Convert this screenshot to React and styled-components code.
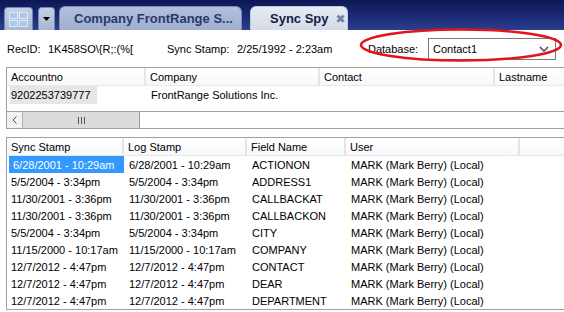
import React from 'react'
import styled, { createGlobalStyle } from 'styled-components'

const GlobalStyle = createGlobalStyle`
  html, body {
    margin: 0;
    padding: 0;
    background: #fff;
    overflow: hidden;
  }
  body {
    font-family: "Liberation Sans", Arial, sans-serif;
    font-size: 11px;
    color: #000;
  }
`

const topColumns = ['139px', '174px', '175px', '1fr']
const bottomColumns = ['117px', '123px', '99px', '174px', '1fr']

const logRows = [
  ['6/28/2001 - 10:29am', '6/28/2001 - 10:29am', 'ACTIONON'],
  ['5/5/2004 - 3:34pm', '5/5/2004 - 3:34pm', 'ADDRESS1'],
  ['11/30/2001 - 3:36pm', '11/30/2001 - 3:36pm', 'CALLBACKAT'],
  ['11/30/2001 - 3:36pm', '11/30/2001 - 3:36pm', 'CALLBACKON'],
  ['5/5/2004 - 3:34pm', '5/5/2004 - 3:34pm', 'CITY'],
  ['11/15/2000 - 10:17am', '11/15/2000 - 10:17am', 'COMPANY'],
  ['12/7/2012 - 4:47pm', '12/7/2012 - 4:47pm', 'CONTACT'],
  ['12/7/2012 - 4:47pm', '12/7/2012 - 4:47pm', 'DEAR'],
  ['12/7/2012 - 4:47pm', '12/7/2012 - 4:47pm', 'DEPARTMENT'],
]

const App = () => {
  return (
    <>
      <GlobalStyle />
      <Window>
        <TabBar>
          <ToolButton $width={29} $gap={0}>
            <svg width="19" height="15" viewBox="0 0 19 15">
              {[[0, 0], [10, 0], [0, 8], [10, 8]].map(([x, y]) => (
                <rect key={`${x}-${y}`} x={x + 0.5} y={y + 0.5} width="8" height="6" fill="#a9c8ee" stroke="#dfe9f7" />
              ))}
            </svg>
          </ToolButton>
          <ToolButton $width={17} $gap={5}>
            <svg width="7" height="4" viewBox="0 0 7 4">
              <polygon points="0,0 7,0 3.5,4" fill="#000" />
            </svg>
          </ToolButton>
          <Tab $gap={4} $width={183}>Company FrontRange S...</Tab>
          <Tab $gap={8} $width={98} $active>
            Sync Spy
            <CloseMark>✖</CloseMark>
          </Tab>
        </TabBar>

        {/* record info strip */}
        <InfoRow>
          <span>RecID:</span>
          <span>1K458SO\{'{'}R;:(%[</span>
          <span>Sync Stamp:</span>
          <span>2/25/1992 - 2:23am</span>
          <span>Database:</span>
          <Select>
            Contact1
            <svg width="10" height="7" viewBox="0 0 10 7">
              <polyline points="1,1 5,5 9,1" fill="none" stroke="#555" strokeWidth="1.6" />
            </svg>
          </Select>
          <Highlight width="204" height="34" viewBox="0 0 204 34">
            <ellipse cx="102" cy="17" rx="100" ry="15.5" fill="none" stroke="#e5141b" strokeWidth="2.6" />
          </Highlight>
        </InfoRow>

        <GridFrame>
          <HeaderRow $cols={topColumns}>
            <HeaderCell>Accountno</HeaderCell>
            <HeaderCell>Company</HeaderCell>
            <HeaderCell>Contact</HeaderCell>
            <HeaderCell>Lastname</HeaderCell>
          </HeaderRow>
          <DataRow $cols={topColumns} $height={18}>
            <Cell $pad={3}><Marked>9202253739777</Marked></Cell>
            <Cell>FrontRange Solutions Inc.</Cell>
            <Cell />
            <Cell />
          </DataRow>
          <Spacer />
          <HScroll>
            <ScrollArrow>
              <svg width="5" height="8" viewBox="0 0 5 8">
                <polyline points="4.5,0.5 1,4 4.5,7.5" fill="none" stroke="#444" strokeWidth="1" />
              </svg>
            </ScrollArrow>
            <Thumb>
              <Grip />
              <Grip />
              <Grip />
            </Thumb>
          </HScroll>
        </GridFrame>

        <GridFrame $gap={8}>
          <HeaderRow $cols={bottomColumns}>
            <HeaderCell>Sync Stamp</HeaderCell>
            <HeaderCell>Log Stamp</HeaderCell>
            <HeaderCell>Field Name</HeaderCell>
            <HeaderCell>User</HeaderCell>
            <HeaderCell />
          </HeaderRow>
          {logRows.map((row, i) => (
            <DataRow key={i} $cols={bottomColumns} $height={17}>
              <Cell $selected={i === 0} $pad={4}>{row[0]}</Cell>
              <Cell>{row[1]}</Cell>
              <Cell>{row[2]}</Cell>
              <Cell>MARK (Mark Berry) (Local)</Cell>
              <Cell />
            </DataRow>
          ))}
        </GridFrame>
      </Window>
    </>
  )
}

const Window = styled.div`
  width: 564px;
  height: 312px;
  overflow: hidden;
  background: #fff;
  display: flex;
  flex-direction: column;
`

const TabBar = styled.div`
  height: 30px;
  flex: none;
  display: flex;
  align-items: flex-end;
  padding-left: 4px;
  background: linear-gradient(#0d1755 0%, #1c2c78 60%, #2b3f8e 100%);
`

const ToolButton = styled.div`
  width: ${p => p.$width}px;
  height: 23px;
  margin-left: ${p => p.$gap}px;
  box-sizing: border-box;
  display: flex;
  align-items: center;
  justify-content: center;
  border: 1px solid #7686b2;
  border-bottom: none;
  border-radius: 4px 4px 0 0;
  background: linear-gradient(#c6d0e4, #a9b6d4);
`

const Tab = styled.div`
  width: ${p => p.$width}px;
  height: 24px;
  margin-left: ${p => p.$gap}px;
  box-sizing: border-box;
  display: flex;
  align-items: center;
  padding-left: ${p => (p.$active ? 19 : 14)}px;
  border: 1px solid ${p => (p.$active ? '#c0cadd' : '#7d8db7')};
  border-bottom: none;
  border-radius: 6px 6px 0 0;
  background: ${p => (p.$active
    ? 'linear-gradient(#e6ebf3, #d3dbe8)'
    : 'linear-gradient(#b2bfdc, #a0afd1)')};
  color: ${p => (p.$active ? '#141c44' : '#2c3868')};
  font-size: 13px;
  font-weight: bold;
  white-space: nowrap;
`

const CloseMark = styled.span`
  margin-left: 7px;
  font-size: 12px;
  color: #7282a6;
  font-family: "DejaVu Sans", sans-serif;
`

const InfoRow = styled.div`
  position: relative;
  height: 37px;
  flex: none;
  display: grid;
  grid-template-columns: 41px 119px 70px 131px 60px 128px;
  align-items: center;
  padding-left: 7px;
  padding-top: 1px;
  box-sizing: border-box;
  white-space: nowrap;
`

const Select = styled.div`
  height: 22px;
  box-sizing: border-box;
  display: flex;
  align-items: center;
  justify-content: space-between;
  padding: 0 6px 0 4px;
  border: 1px solid #7a7a7a;
  background: #fff;
`

const Highlight = styled.svg`
  position: absolute;
  left: 359px;
  top: -2px;
  pointer-events: none;
`

const GridFrame = styled.div`
  margin: ${p => p.$gap || 0}px 0 0 6px;
  width: 620px;
  flex: none;
  border: 1px solid #a0a0a0;
  background: #fff;
`

const HeaderRow = styled.div`
  display: grid;
  grid-template-columns: ${p => p.$cols.join(' ')};
  height: 17px;
  border-bottom: 1px solid #e8e8e8;
  background: linear-gradient(#ffffff, #f7f8fa);
`

const HeaderCell = styled.div`
  display: flex;
  align-items: center;
  padding-left: 4px;
  border-right: 2px solid #e5e5e5;
  white-space: nowrap;
`

const DataRow = styled.div`
  display: grid;
  grid-template-columns: ${p => p.$cols.join(' ')};
  height: ${p => p.$height}px;
`

const Cell = styled.div`
  display: flex;
  align-items: center;
  padding-left: ${p => p.$pad || 5}px;
  margin-left: ${p => (p.$selected ? 2 : 0)}px;
  white-space: nowrap;
  overflow: hidden;
  background: ${p => (p.$selected ? '#3399ff' : 'transparent')};
  color: ${p => (p.$selected ? '#fff' : '#000')};
`

const Marked = styled.span`
  background: #e6e6e6;
  padding: 3px 6px 3px 1px;
`

const Spacer = styled.div`
  height: 7px;
`

const HScroll = styled.div`
  height: 16px;
  display: flex;
  border-top: 1px solid #a0a0a0;
  background: #fff;
`

const ScrollArrow = styled.div`
  width: 16px;
  box-sizing: border-box;
  display: flex;
  align-items: center;
  justify-content: center;
  border-right: 1px solid #b0b0b0;
  background: #f3f3f3;
`

const Thumb = styled.div`
  width: 117px;
  box-sizing: border-box;
  display: flex;
  align-items: center;
  justify-content: center;
  gap: 2px;
  border-right: 1px solid #9a9a9a;
  background: #dcdcdc;
`

const Grip = styled.span`
  width: 1px;
  height: 7px;
  background: #555;
`

export default App
